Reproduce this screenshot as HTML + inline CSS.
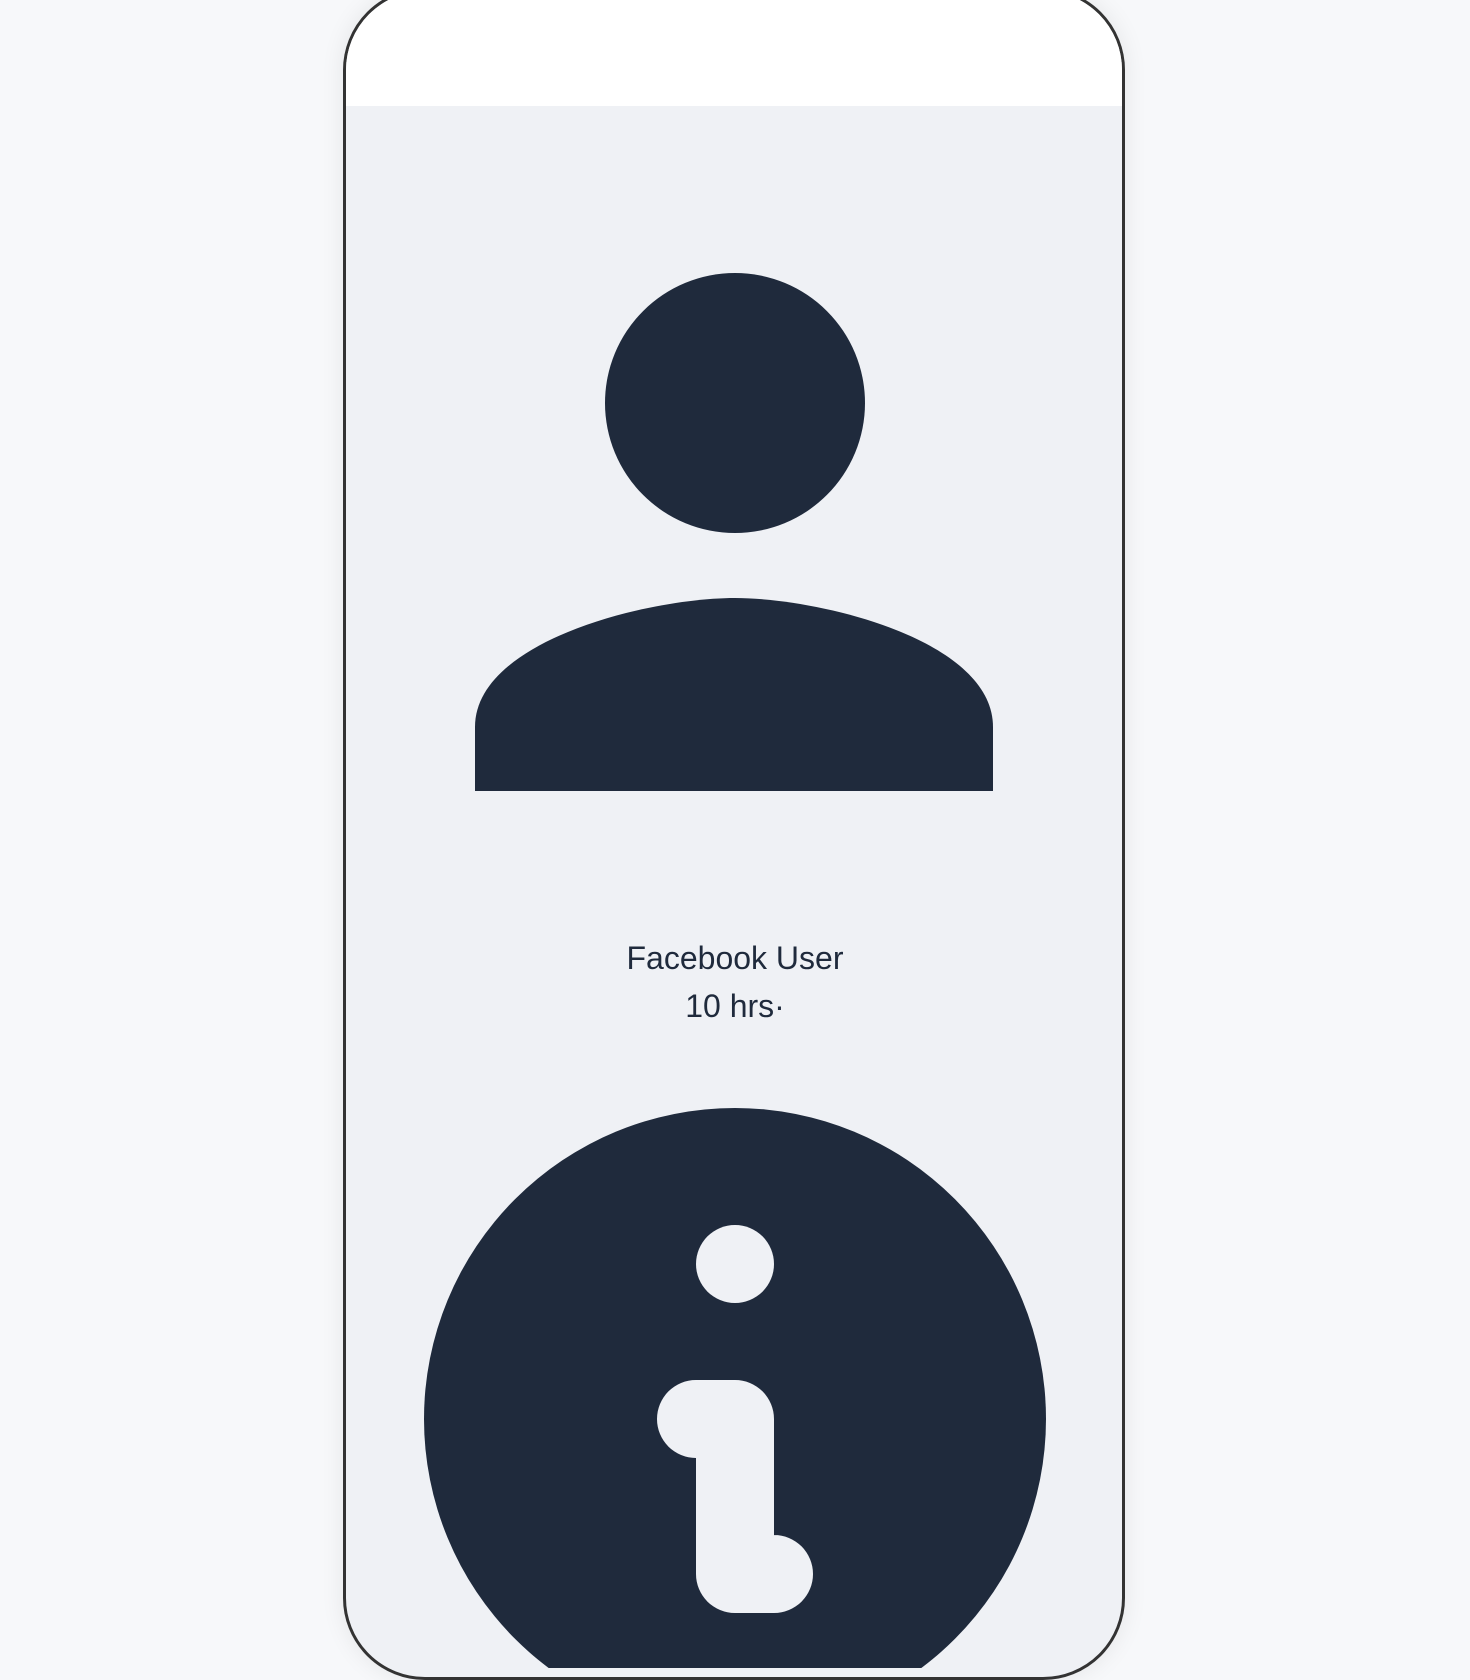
<!DOCTYPE html>
<html><head><style>
html,body{margin:0;padding:0;width:1470px;height:1668px;overflow:hidden;background:#f7f8fa;}
.phone{position:absolute;left:343px;top:-12px;width:782px;height:1692px;box-sizing:border-box;border:3px solid #333;border-radius:82px;background:#eff1f5;overflow:hidden;box-shadow:0 0 24px rgba(0,0,0,0.08);}
.hdr{position:absolute;left:0;top:0;right:0;height:115px;background:#fff;}
.txt{position:absolute;left:0;right:0;text-align:center;font-family:"Liberation Sans",sans-serif;font-size:32px;color:#1f2a3c;line-height:48px;}
svg{position:absolute;left:0;top:0;}
</style></head><body>
<div class="phone"><div class="hdr"></div></div>
<svg width="1470" height="1668">
<circle cx="735" cy="403" r="130" fill="#1f2a3c"/>
<path d="M475 791 V727 C475 640 650 598 735 598 C820 598 993 640 993 727 V791 Z" fill="#1f2a3c"/>
<circle cx="735" cy="1419" r="311" fill="#1f2a3c"/>
<circle cx="735" cy="1264" r="39" fill="#eff1f5"/>
<path d="M696 1419 L735 1419 L735 1574 L774 1574" fill="none" stroke="#eff1f5" stroke-width="78" stroke-linecap="round" stroke-linejoin="round"/>
</svg>
<div class="txt" style="top:934px">Facebook User</div>
<div class="txt" style="top:982px">10 hrs·</div>
</body></html>
